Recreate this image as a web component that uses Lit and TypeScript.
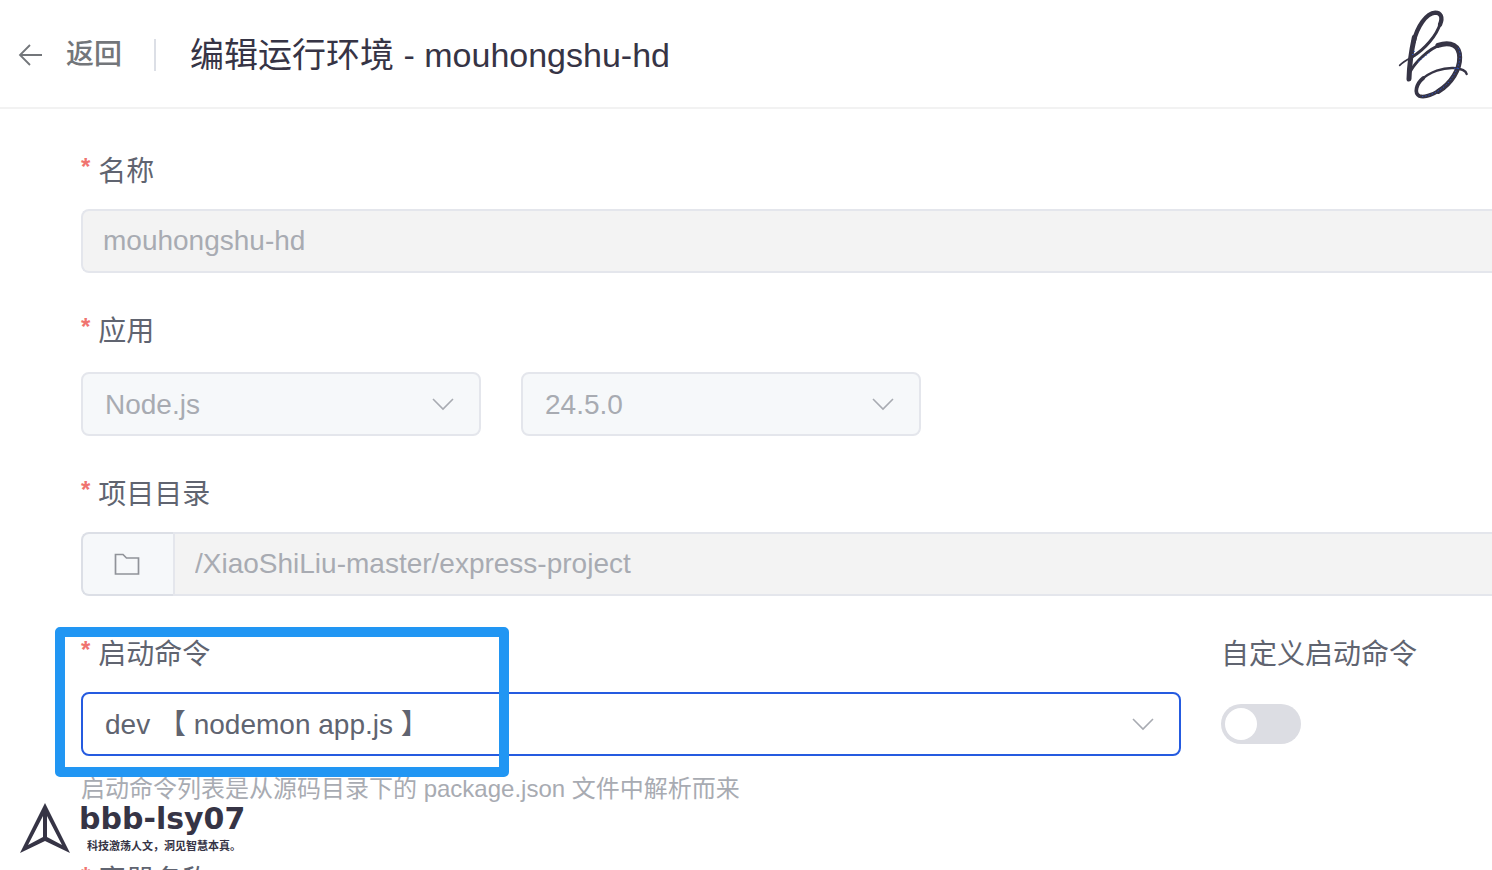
import { LitElement, html, css, svg } from "lit";
import { customElement, property, state } from "lit/decorators.js";

const chevron = svg`<path d="M1 1 L11 11 L21 1" fill="none" stroke="#a8abb2" stroke-width="1.6" />`;

@customElement("app-root")
export class AppRoot extends LitElement {
  @property({ type: String }) name = "mouhongshu-hd";
  @property({ type: String }) path = "/XiaoShiLiu-master/express-project";
  @state() private custom = false;

  static styles = css`
    :host {
      display: block;
      position: relative;
      height: 100vh;
      overflow: hidden;
      background: #fff;
      color: #606266;
      font-family: "Liberation Sans", "Noto Sans CJK SC", sans-serif;
      font-size: 28px;
      line-height: 42px;
    }
    * {
      box-sizing: border-box;
    }
    header {
      display: flex;
      align-items: center;
      padding: 31px 18px 28px;
      border-bottom: 2px solid #f2f2f2;
    }
    .back {
      display: flex;
      align-items: center;
      gap: 23px;
      padding: 0;
      border: 0;
      background: none;
      color: #73767a;
      font: inherit;
      font-weight: 500;
      line-height: 44px;
    }
    .back svg {
      width: 25px;
      height: 24px;
    }
    .divider {
      width: 2px;
      height: 32px;
      margin: 0 34px 0 32px;
      background: #dcdfe6;
    }
    h1 {
      margin: 0;
      color: #363445;
      font-size: 34px;
      line-height: 48px;
      font-weight: 400;
    }
    form {
      display: grid;
      gap: 38px;
      padding: 42px 0 0 81px;
    }
    .field {
      display: grid;
      align-content: start;
      gap: 16px;
      min-width: 0;
      position: relative;
    }
    .label {
      display: block;
      color: #606470;
    }
    .required::before {
      content: "*";
      margin-right: 8px;
      color: #f07470;
      font-size: 24px;
      font-weight: 700;
      vertical-align: 6px;
      line-height: 1;
    }
    input[type="text"] {
      width: 100%;
      min-width: 0;
      height: 64px;
      padding: 0 20px;
      border: 2px solid #e4e6ec;
      border-right: 0;
      border-radius: 8px 0 0 8px;
      background: #f3f3f3;
      color: #a8abb2;
      font: inherit;
    }
    .pickers {
      display: flex;
      gap: 40px;
      padding-top: 3px;
    }
    .picker {
      display: grid;
      align-items: center;
      width: 400px;
    }
    .picker.wide {
      width: 100%;
    }
    .picker > * {
      grid-area: 1 / 1;
    }
    .picker svg {
      justify-self: end;
      width: 22px;
      height: 13px;
      margin-right: 27px;
      pointer-events: none;
    }
    select {
      appearance: none;
      width: 100%;
      height: 64px;
      padding: 2px 60px 0 22px;
      border: 2px solid #255be0;
      border-radius: 8px;
      outline: 0;
      background: #fff;
      color: #606470;
      font: inherit;
    }
    select:disabled {
      opacity: 1;
      border-color: #e4e6ec;
      background: #f6f8fa;
      color: #a8abb2;
    }
    .group {
      display: flex;
    }
    .folder {
      display: flex;
      flex: none;
      align-items: center;
      justify-content: center;
      width: 92px;
      height: 64px;
      padding: 0 2px 0 0;
      border: 2px solid #dcdfe6;
      border-right: 0;
      border-radius: 8px 0 0 8px;
      background: #f6f8fa;
    }
    .folder svg {
      width: 26px;
      height: 24px;
    }
    .group input[type="text"] {
      border-radius: 0;
    }
    .command {
      display: grid;
      grid-template-columns: minmax(0, 1100px) minmax(0, 1fr);
      gap: 40px;
    }
    .stack {
      display: grid;
      gap: 12px;
    }
    .hint {
      margin: 0;
      color: #a8abb2;
      font-size: 24px;
    }
    .switch {
      appearance: none;
      display: flex;
      align-items: center;
      width: 80px;
      height: 40px;
      margin: 12px 0;
      padding: 4px;
      border-radius: 20px;
      background: #dcdde3;
    }
    .switch::before {
      content: "";
      width: 32px;
      height: 32px;
      border-radius: 50%;
      background: #fff;
    }
    .switch:checked {
      justify-content: flex-end;
      background: #255be0;
    }
    .frame {
      position: absolute;
      top: -7px;
      left: -26px;
      width: 454px;
      height: 150px;
      border: 10px solid #2196f3;
      border-radius: 5px;
      pointer-events: none;
    }
    .last {
      margin-top: 12px;
    }
    .signature {
      position: absolute;
      top: 0;
      right: 0;
      width: 112px;
      height: 120px;
    }
    .brand {
      position: absolute;
      left: 19px;
      bottom: 16px;
      display: flex;
      gap: 8px;
      align-items: end;
      color: #363445;
    }
    .brand svg {
      width: 52px;
      height: 52px;
    }
    .brand-name {
      font: 700 30px/36px "DejaVu Sans", sans-serif;
    }
    .brand-line {
      padding-left: 8px;
      font: 700 11px/17px "Noto Sans CJK SC", sans-serif;
    }
  `;

  private picker(id: string, label: string, value: string, disabled: boolean) {
    return html`<div class="picker ${disabled ? "" : "wide"}">
      <select id=${id} aria-label=${label} ?disabled=${disabled}>
        <option>${value}</option>
      </select>
      <svg viewBox="0 0 22 13" aria-hidden="true">${chevron}</svg>
    </div>`;
  }

  render() {
    return html`
      <header>
        <button class="back" type="button">
          <svg viewBox="0 0 25 24" fill="none" stroke="#73767a" stroke-width="1.8" aria-hidden="true">
            <path d="M24 12H2M12 2L2 12L12 22" />
          </svg>
          返回
        </button>
        <span class="divider"></span>
        <h1>编辑运行环境 - ${this.name}</h1>
      </header>
      <form>
        <div class="field">
          <label class="label required" for="name">名称</label>
          <input id="name" type="text" .value=${this.name} disabled />
        </div>
        <div class="field">
          <label class="label required" for="runtime">应用</label>
          <div class="pickers">
            ${this.picker("runtime", "应用", "Node.js", true)}
            ${this.picker("version", "版本", "24.5.0", true)}
          </div>
        </div>
        <div class="field">
          <label class="label required" for="path">项目目录</label>
          <div class="group">
            <button class="folder" type="button" aria-label="项目目录">
              <svg viewBox="0 0 26 24" fill="none" stroke="#909399" stroke-width="1.7" aria-hidden="true">
                <path d="M1.5 2.5H9L12.5 6H24.5V22H1.5Z" />
              </svg>
            </button>
            <input id="path" type="text" .value=${this.path} disabled />
          </div>
        </div>
        <div class="command">
          <div class="field">
            <label class="label required" for="command">启动命令</label>
            <div class="stack">
              ${this.picker("command", "启动命令", "dev 【 nodemon app.js 】", false)}
              <p class="hint">启动命令列表是从源码目录下的 package.json 文件中解析而来</p>
            </div>
            <div class="frame"></div>
          </div>
          <div class="field">
            <label class="label" for="custom">自定义启动命令</label>
            <div>
              <input
                class="switch"
                id="custom"
                type="checkbox"
                role="switch"
                .checked=${this.custom}
                @change=${(e: Event) => (this.custom = (e.target as HTMLInputElement).checked)}
              />
            </div>
          </div>
        </div>
        <div class="field last">
          <label class="label required" for="container">容器名称</label>
          <input id="container" type="text" disabled />
        </div>
      </form>
      <svg class="signature" viewBox="0 0 336 360" fill="none" stroke="#363445" stroke-linecap="round" aria-hidden="true">
        <path d="M59 196C72 182 88 176 104 167" stroke-width="5" />
        <path d="M96 171C135 148 170 106 181 70" stroke-width="9" />
        <path d="M180 74C190 50 181 38 166 38C138 40 112 80 101 125" stroke-width="13" />
        <path d="M103 112C93 158 88 200 87 237" stroke-width="15" />
        <path d="M91 214C108 184 145 148 182 134" stroke-width="9" />
        <path d="M174 136C214 122 239 139 239 172C240 208 214 250 175 274" stroke-width="15" />
        <path d="M180 270C155 286 130 293 118 288C102 280 108 252 130 234" stroke-width="11" />
        <path d="M123 241C150 214 190 203 220 204C247 206 258 211 260 222" stroke-width="7" />
        <g stroke="#2858e8" stroke-width="3" stroke-dasharray="1 9">
          <path d="M236 146C250 174 228 226 196 257C172 277 150 288 122 290" />
          <path d="M224 205L242 206M116 184L154 154M98 164L104 152" />
        </g>
      </svg>
      <div class="brand">
        <svg viewBox="0 0 52 52" fill="#363445" fill-rule="evenodd" aria-hidden="true">
          <path d="M26 1L51 51L26 39L1 51ZM24 14L9 43L24 35ZM28 14L43 43L28 35Z" />
        </svg>
        <div>
          <div class="brand-name">bbb-lsy07</div>
          <div class="brand-line">科技激荡人文，洞见智慧本真。</div>
        </div>
      </div>
    `;
  }
}
